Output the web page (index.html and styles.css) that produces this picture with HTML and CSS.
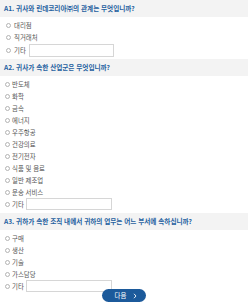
FILE: index.html
```html
<!DOCTYPE html>
<html lang="ko">
<head>
<meta charset="utf-8">
<link rel="stylesheet" href="styles.css">
</head>
<body>
<div class="survey">
  <section class="q q1">
    <h2 class="q-head">A1. 귀사와 린데코리아㈜의 관계는 무엇입니까?</h2>
    <ul class="opts">
      <li class="opt"><span class="radio"></span>대리점</li>
      <li class="opt"><span class="radio"></span>직거래처</li>
      <li class="opt other"><span class="radio"></span>기타<span class="box"></span></li>
    </ul>
  </section>
  <section class="q q2">
    <h2 class="q-head">A2. 귀사가 속한 산업군은 무엇입니까?</h2>
    <ul class="opts">
      <li class="opt"><span class="radio"></span>반도체</li>
      <li class="opt"><span class="radio"></span>화학</li>
      <li class="opt"><span class="radio"></span>금속</li>
      <li class="opt"><span class="radio"></span>에너지</li>
      <li class="opt"><span class="radio"></span>우주항공</li>
      <li class="opt"><span class="radio"></span>건강의료</li>
      <li class="opt"><span class="radio"></span>전기전자</li>
      <li class="opt"><span class="radio"></span>식품 및 음료</li>
      <li class="opt"><span class="radio"></span>일반 제조업</li>
      <li class="opt"><span class="radio"></span>운송 서비스</li>
      <li class="opt other"><span class="radio"></span>기타<span class="box"></span></li>
    </ul>
  </section>
  <section class="q q3">
    <h2 class="q-head">A3. 귀하가 속한 조직 내에서 귀하의 업무는 어느 부서에 속하십니까?</h2>
    <ul class="opts">
      <li class="opt"><span class="radio"></span>구매</li>
      <li class="opt"><span class="radio"></span>생산</li>
      <li class="opt"><span class="radio"></span>기술</li>
      <li class="opt"><span class="radio"></span>가스담당</li>
      <li class="opt other"><span class="radio"></span>기타<span class="box"></span></li>
    </ul>
  </section>
  <div class="actions">
    <button class="next">다음<svg class="chev" width="4" height="6" viewBox="0 0 4 6"><path d="M1 0.8 L3 3 L1 5.2" fill="none" stroke="#fff" stroke-width="0.9"/></svg></button>
  </div>
</div>
</body>
</html>
```

FILE: styles.css
```css
* { box-sizing: border-box; }
html, body { margin: 0; padding: 0; background: #fff; }
body {
  font-family: "Noto Sans CJK KR", "Noto Sans", sans-serif;
  width: 248px;
  height: 308px;
  overflow: hidden;
}
.q-head {
  margin: 0;
  height: 17px;
  line-height: 17px;
  padding-left: 4px;
  background: #f3f3f3;
  color: #1f5f9f;
  font-size: 6.6px;
  font-weight: 700;
  white-space: nowrap;
}
.opts {
  list-style: none;
  margin: 0;
  padding: 2px 0 3px 0;
}
.opt {
  display: flex;
  align-items: center;
  height: 12px;
  padding-left: 5px;
  font-size: 6.4px;
  color: #555;
}
.radio {
  width: 5px;
  height: 5px;
  border: 1px solid #b3b3b3;
  border-radius: 50%;
  margin-right: 2px;
  flex: none;
}
.q1 .opt { padding-left: 6px; }
.q1 .radio { margin-right: 3px; }
.q1 .opts { padding-top: 2px; }
.q1 .opt + .opt { margin-top: 0.5px; }
.box {
  width: 86px;
  height: 12px;
  border: 1px solid #d6d6d6;
  background: #fff;
  margin-left: 2px;
}
.q1 .box { margin-left: 3px; width: 85px; height: 13px; }
.actions {
  display: flex;
  justify-content: center;
  margin-top: -6px;
}
.next {
  display: flex;
  align-items: center;
  justify-content: center;
  gap: 7px;
  width: 44px;
  height: 13px;
  padding: 0 0 0 4px;
  border: none;
  border-radius: 7px;
  background: #1c5a9b;
  color: #fff;
  font-family: "Noto Sans CJK KR", sans-serif;
  font-size: 6.4px;
}
.chev { display: block; }
```
